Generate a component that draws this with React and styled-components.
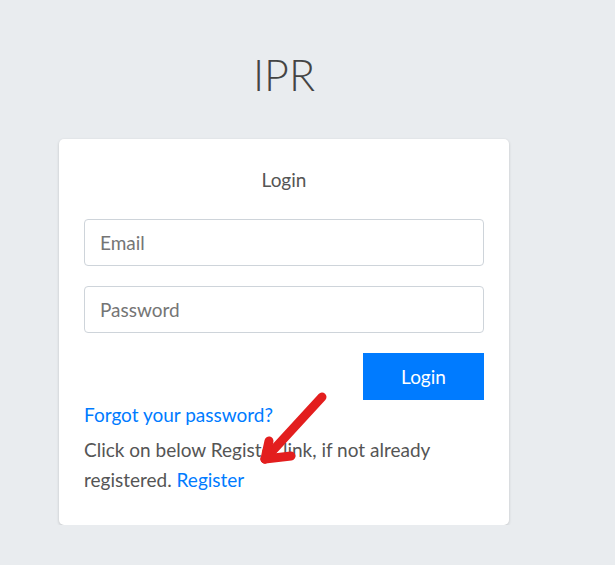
import styled, { createGlobalStyle } from 'styled-components'


const GlobalStyle = createGlobalStyle`
  body {
    margin: 0;
    background: #e9ecef;
    font-family: "Source Sans Pro", Lato, "Liberation Sans", sans-serif;
    color: #555;
  }

  * {
    box-sizing: border-box;
  }
`

const Page = styled.div`
  width: 450px;
  margin-left: 59px;
  padding-top: 47px;
  position: relative;
`

const Title = styled.h1`
  margin: 0 0 36px;
  text-align: center;
  font-weight: 300;
  font-size: 43px;
  line-height: 56px;
  color: #444;
`

const Card = styled.div`
  background: #fff;
  border-radius: 5px;
  box-shadow: 0 1px 3px rgba(0, 0, 0, 0.18);
  padding: 28px 25px 30px;
`

const CardTitle = styled.p`
  margin: 0 0 26px;
  text-align: center;
  font-size: 19px;
  line-height: 26px;
  color: #555;
`

const Input = styled.input`
  display: block;
  width: 100%;
  height: 47px;
  padding: 0 15px;
  margin-bottom: 20px;
  border: 1px solid #ced4da;
  border-radius: 4px;
  font: inherit;
  font-size: 19px;
  color: #495057;
  outline: none;

  ::placeholder {
    color: #6c757d;
  }
`

const Actions = styled.div`
  display: flex;
  justify-content: flex-end;
  margin-top: 3px;
`

const Button = styled.button`
  width: 121px;
  height: 47px;
  border: none;
  background: #007bff;
  color: #fff;
  font: inherit;
  font-size: 19px;
  cursor: pointer;
`

const Link = styled.a`
  color: #007bff;
  text-decoration: none;
  font-size: 19px;
`

const Forgot = styled.p`
  margin: 0 0 5px;
  font-size: 19px;
  line-height: 30px;
`

const Note = styled.p`
  margin: 0;
  font-size: 19px;
  line-height: 30px;
  color: #555;
`

const Arrow = styled.svg`
  position: absolute;
  left: 196px;
  top: 385px;
  pointer-events: none;
`


function App() {
  return (
    <>
      <GlobalStyle />
      <Page>
        <Title>IPR</Title>

        <Card>
          <CardTitle>Login</CardTitle>
          <Input placeholder='Email' />
          <Input type='password' placeholder='Password' />

          <Actions>
            <Button>Login</Button>
          </Actions>

          <Forgot><Link href='#'>Forgot your password?</Link></Forgot>
          <Note>
            Click on below Register link, if not already registered. <Link href='#'>Register</Link>
          </Note>
        </Card>

        {/* red annotation arrow drawn over the card */}
        <Arrow width='80' height='90' viewBox='0 0 80 90'>
          <g stroke='#e31e1e' strokeWidth='9' strokeLinecap='round' strokeLinejoin='round' fill='none'>
            <path d='M67 12 L10 74' />
            <path d='M10 74 L36 71' />
            <path d='M10 74 L14 56' />
          </g>
        </Arrow>
      </Page>
    </>
  )
}

export default App;
